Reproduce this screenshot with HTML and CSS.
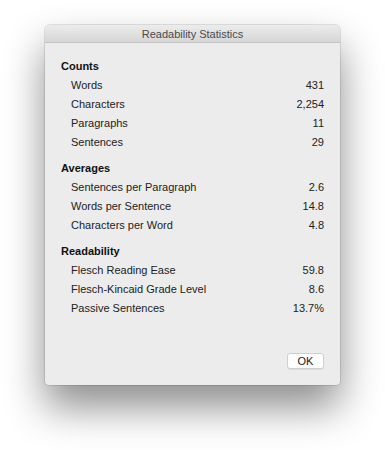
FILE: index.html
```html
<!DOCTYPE html>
<html lang="en">
<head>
  <meta charset="UTF-8" />
  <title>Readability Statistics</title>
  <link rel="stylesheet" href="styles.css">
</head>
<body>
  <div class="window">
    <div class="titlebar">Readability Statistics</div>
    <div class="content">
      <div class="section">
        <div class="heading">Counts</div>
        <div class="row"><span>Words</span><span>431</span></div>
        <div class="row"><span>Characters</span><span>2,254</span></div>
        <div class="row"><span>Paragraphs</span><span>11</span></div>
        <div class="row"><span>Sentences</span><span>29</span></div>
      </div>
      <div class="section">
        <div class="heading">Averages</div>
        <div class="row"><span>Sentences per Paragraph</span><span>2.6</span></div>
        <div class="row"><span>Words per Sentence</span><span>14.8</span></div>
        <div class="row"><span>Characters per Word</span><span>4.8</span></div>
      </div>
      <div class="section">
        <div class="heading">Readability</div>
        <div class="row"><span>Flesch Reading Ease</span><span>59.8</span></div>
        <div class="row"><span>Flesch-Kincaid Grade Level</span><span>8.6</span></div>
        <div class="row"><span>Passive Sentences</span><span>13.7%</span></div>
      </div>
      <div class="actions">
        <button class="ok-btn">OK</button>
      </div>
    </div>
  </div>
</body>
</html>
```

FILE: styles.css
```css
* {
    margin: 0;
    padding: 0;
    box-sizing: border-box;
}

html {
    background: #ffffff;
}

body {
    font-family: "Liberation Sans", Arial, sans-serif;
    color: #1e1e1e;
    min-height: 450px;
    padding: 25px 0 0 45px;
}

.window {
    width: 295px;
    height: 360px;
    background: #ececec;
    border-radius: 5px 5px 4px 4px;
    display: flex;
    flex-direction: column;
    box-shadow: 0 0 0 1px rgba(0, 0, 0, 0.1), 0 22px 40px rgba(0, 0, 0, 0.45);
    overflow: hidden;
}

.titlebar {
    height: 18px;
    line-height: 18px;
    text-align: center;
    font-size: 11px;
    color: #4a4a4a;
    background: linear-gradient(#ececec, #d6d6d6);
    border-bottom: 1px solid #c4c4c4;
}

.content {
    flex: 1;
    display: flex;
    flex-direction: column;
    padding: 14px 16px 16px 16px;
    font-size: 11px;
}

.section + .section {
    margin-top: 7px;
}

.heading {
    font-weight: bold;
    line-height: 19px;
    color: #111;
}

.row {
    display: flex;
    justify-content: space-between;
    line-height: 19px;
    padding-left: 10px;
    color: #222;
}

.actions {
    margin-top: auto;
    display: flex;
    justify-content: flex-end;
}

.ok-btn {
    width: 37px;
    height: 16px;
    font-family: inherit;
    font-size: 11px;
    color: #222;
    background: #ffffff;
    border: 1px solid #cfcfcf;
    border-radius: 3px;
    box-shadow: 0 1px 0 rgba(0, 0, 0, 0.06);
}
```
